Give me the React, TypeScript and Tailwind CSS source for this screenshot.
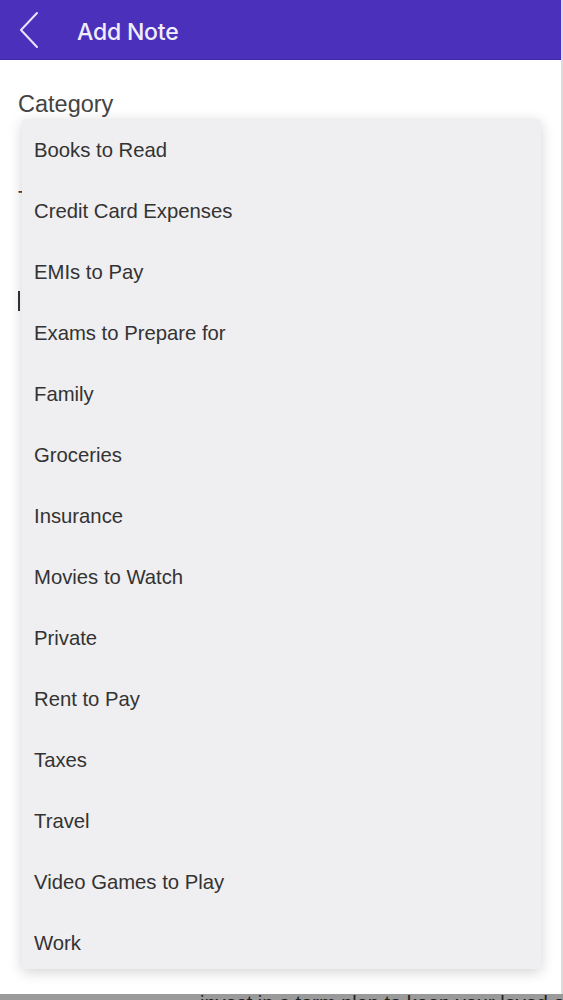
import React from 'react';

const categories = [
  'Books to Read',
  'Credit Card Expenses',
  'EMIs to Pay',
  'Exams to Prepare for',
  'Family',
  'Groceries',
  'Insurance',
  'Movies to Watch',
  'Private',
  'Rent to Pay',
  'Taxes',
  'Travel',
  'Video Games to Play',
  'Work',
];

const App: React.FC = () => {
  return (
    <div className="relative w-[563px] h-[1000px] overflow-hidden bg-[#dcdcdc] font-['Liberation_Sans',sans-serif]">
      <div className="relative w-[561px] h-[994px] bg-white">
        {/* Header */}
        <div className="h-[60px] bg-[#4b30bc] flex items-center border-b border-[#3f27a6]">
          <svg className="ml-[17px] mt-[1px] w-[24px] h-[38px]" viewBox="0 0 24 38" fill="none">
            <path d="M20 2 L4 19 L20 36" stroke="#e8e4fb" strokeWidth="2" strokeLinecap="round" strokeLinejoin="round" />
          </svg>
          <span className="ml-[36px] pt-[5px] text-[23px] font-['Inter',sans-serif] font-medium text-[#f1eefc] tracking-[-0.2px]">Add Note</span>
        </div>

        {/* Form underneath */}
        <div className="px-[18px] pt-[30px]">
          <div className="text-[23.5px] leading-[28px] text-[#444444]">Category</div>
          <div className="mt-[64px] text-[22px] text-[#444]">T</div>
          <div className="mt-[76px] w-[2px] h-[20px] bg-[#333]" />
        </div>

        {/* Dropdown */}
        <div className="absolute left-[22px] top-[119px] w-[519px] h-[850px] bg-[#efeef0] rounded-[3px] shadow-[0_3px_14px_rgba(0,0,0,0.18)] flex flex-col pt-[1px]">
          {categories.map((c) => (
            <div key={c} className="h-[61px] shrink-0 flex items-center pl-[12px] text-[20.3px] text-[#333333]">
              {c}
            </div>
          ))}
        </div>
      </div>

      {/* Bottom bar peeking */}
      <div className="h-[6px] bg-[#9a9a9a] overflow-hidden">
        <div className="pl-[200px] -mt-[1px] text-[20px] leading-[20px] text-[#222] whitespace-nowrap">invest in a term plan to keep your loved ones secure</div>
      </div>
    </div>
  );
};

export default App;
